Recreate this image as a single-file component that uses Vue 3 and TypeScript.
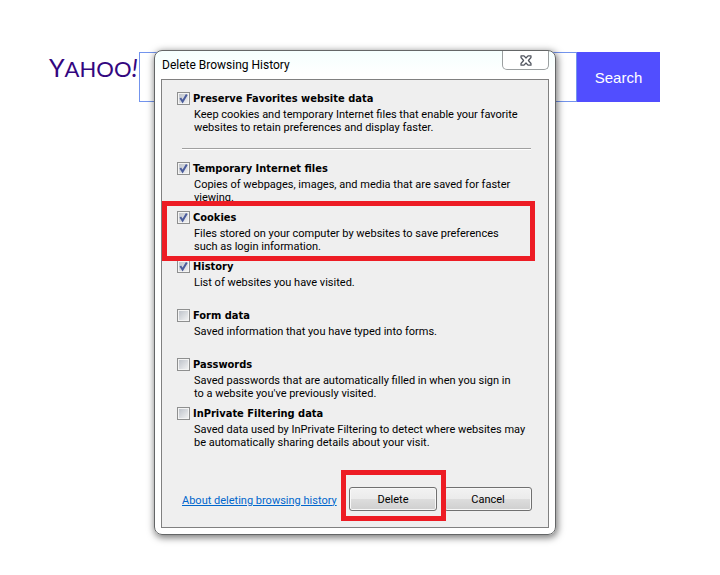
<script setup lang="ts">
import { reactive, ref } from 'vue'

interface DataOption {
  id: string
  title: string
  lines: string[]
  checked: boolean
  marked?: boolean
}

const query = ref('')

const options = reactive<DataOption[]>([
  {
    id: 'favorites',
    title: 'Preserve Favorites website data',
    lines: ['Keep cookies and temporary Internet files that enable your favorite', 'websites to retain preferences and display faster.'],
    checked: true,
  },
  {
    id: 'temp',
    title: 'Temporary Internet files',
    lines: ['Copies of webpages, images, and media that are saved for faster', 'viewing.'],
    checked: true,
  },
  {
    id: 'cookies',
    title: 'Cookies',
    lines: ['Files stored on your computer by websites to save preferences', 'such as login information.'],
    checked: true,
    marked: true,
  },
  { id: 'history', title: 'History', lines: ['List of websites you have visited.'], checked: true },
  { id: 'form', title: 'Form data', lines: ['Saved information that you have typed into forms.'], checked: false },
  {
    id: 'passwords',
    title: 'Passwords',
    lines: ['Saved passwords that are automatically filled in when you sign in', "to a website you've previously visited."],
    checked: false,
  },
  {
    id: 'inprivate',
    title: 'InPrivate Filtering data',
    lines: ['Saved data used by InPrivate Filtering to detect where websites may', 'be automatically sharing details about your visit.'],
    checked: false,
  },
])
</script>

<template>
  <div class="page">
    <form class="search" role="search" @submit.prevent>
      <a class="logo" href="#"><span class="logo-y">Y</span>AHOO<span class="logo-bang">!</span></a>
      <input v-model="query" class="search-input" type="text" aria-label="Search the web" />
      <button class="search-button" type="submit">Search</button>
    </form>

    <section class="dialog" role="dialog" aria-labelledby="dialog-title">
      <header class="titlebar">
        <h1 id="dialog-title" class="title">Delete Browsing History</h1>
        <button class="close" type="button" aria-label="Close">
          <svg width="12" height="11" viewBox="0 0 12 11">
            <path
              d="M1 .8h3L6 3l2-2.200h3v1.700L8.400 5.500 11 8.500v1.700H8L6 8l-2 2.200H1V8.500l2.600-3L1 2.500z"
              fill="#fff"
              stroke="#50545e"
              stroke-width="1.200"
              stroke-linejoin="round"
            />
          </svg>
        </button>
      </header>

      <div class="panel">
        <div v-for="option in options" :key="option.id" class="option" :class="{ first: option.id === 'favorites', marked: option.marked }">
          <label class="option-head" :for="option.id">
            <span class="box">
              <input :id="option.id" v-model="option.checked" type="checkbox" class="check" />
              <svg v-if="option.checked" class="tick" width="13" height="13" viewBox="0 0 13 13">
                <path d="M3.300 6 5.600 9.600 9.800 2.600" fill="none" stroke="#4a5c9c" stroke-width="2" />
              </svg>
            </span>
            <span class="option-title">{{ option.title }}</span>
          </label>
          <p class="desc">
            <span v-for="line in option.lines" :key="line" class="line">{{ line }}</span>
          </p>
        </div>

        <footer class="footer">
          <a class="about" href="#">About deleting browsing history</a>
          <span class="action marked-action"><button class="button" type="button">Delete</button></span>
          <span class="action"><button class="button" type="button">Cancel</button></span>
        </footer>
      </div>
    </section>
  </div>
</template>

<style>
body {
  background: #fff;
}
</style>

<style scoped>
.page {
  position: relative;
  min-height: 100vh;
  box-sizing: border-box;
  padding: 52px 60px 0 49px;
  font-family: Roboto, sans-serif;
  font-size: 11px;
  color: #000;
}
.search {
  display: flex;
  height: 50px;
}
.logo {
  flex: 0 0 90px;
  min-width: 0;
  height: 30px;
  font-family: Lato, sans-serif;
  font-size: 22px;
  line-height: 30px;
  color: #33067f;
  text-decoration: none;
  white-space: nowrap;
}
.logo-y {
  font-size: 25px;
}
.logo-bang {
  font-size: 25px;
  font-style: italic;
}
.search-input {
  flex: 1;
  min-width: 0;
  box-sizing: border-box;
  border: 1px solid #7394ed;
  padding: 0 12px;
  font: 16px 'Liberation Sans', sans-serif;
  outline: none;
}
.search-button {
  width: 83px;
  border: 0;
  background: #514eff;
  color: #fff;
  font: 15px 'Liberation Sans', sans-serif;
}
.dialog {
  position: absolute;
  top: 50px;
  left: 154px;
  right: 164px;
  box-sizing: border-box;
  padding: 0 6px 6px;
  border: 1px solid #646667;
  border-radius: 8px;
  background: linear-gradient(#f5fffe, #fff 24px);
  box-shadow: 1px 2px 7px 1px rgba(0, 0, 0, 0.5);
}
.titlebar {
  display: flex;
  justify-content: space-between;
  height: 28px;
}
.title {
  margin: 0 0 0 1px;
  font: 12px/28px Roboto, sans-serif;
}
.close {
  display: flex;
  align-items: center;
  justify-content: center;
  width: 47px;
  height: 19px;
  padding: 0;
  border: 1px solid #9b9fa0;
  border-top: 0;
  border-radius: 0 0 5px 5px;
  background: #fff;
}
.panel {
  padding: 12px 16px 16px 15px;
  border: 1px solid #808080;
  background: #efefef;
}
.option {
  position: relative;
  height: 49px;
}
.option.first {
  height: 56px;
  margin-bottom: 14px;
}
.option.first::after {
  content: '';
  position: absolute;
  left: 5px;
  right: 1px;
  bottom: -2px;
  height: 1px;
  background: #a0a0a0;
  border-bottom: 1px solid #fff;
}
.option.marked::before {
  content: '';
  position: absolute;
  z-index: 1;
  top: -10px;
  left: -15px;
  right: -3px;
  height: 50px;
  border: 5px solid #ed1c24;
  pointer-events: none;
}
.option-head {
  display: flex;
  gap: 3px;
  line-height: 13px;
}
.box {
  position: relative;
  width: 13px;
  height: 13px;
}
.check {
  display: block;
  appearance: none;
  width: 13px;
  height: 13px;
  margin: 0;
  border: 1px solid #8e8f8f;
  background: linear-gradient(135deg, #b9bec6, #f6f6f6);
  box-shadow: inset 0 0 0 1px #f4f4f4;
}
.tick {
  position: absolute;
  inset: 0;
}
.option-title {
  font-family: 'DejaVu Sans Condensed', 'DejaVu Sans', sans-serif;
  font-weight: bold;
}
.desc {
  margin: 3px 0 0 17px;
  line-height: 13px;
  white-space: nowrap;
}
.line {
  display: block;
}
.footer {
  display: flex;
  align-items: center;
  gap: 7px;
  margin-top: 31px;
}
.about {
  margin: 2px auto 0 5px;
  color: #0066cc;
  white-space: nowrap;
}
.action {
  position: relative;
}
.marked-action::before {
  content: '';
  position: absolute;
  z-index: 1;
  inset: -17px -9px -10px -8px;
  border: 5px solid #ed1c24;
  pointer-events: none;
}
.button {
  display: block;
  width: 88px;
  height: 24px;
  padding: 0;
  border: 1px solid #707070;
  border-radius: 3px;
  background: linear-gradient(#f2f2f2, #ebebeb 50%, #dddddd 50%, #cfcfcf);
  box-shadow: inset 0 0 0 1px #f8f8f8;
  color: #000;
  font: inherit;
}
</style>
